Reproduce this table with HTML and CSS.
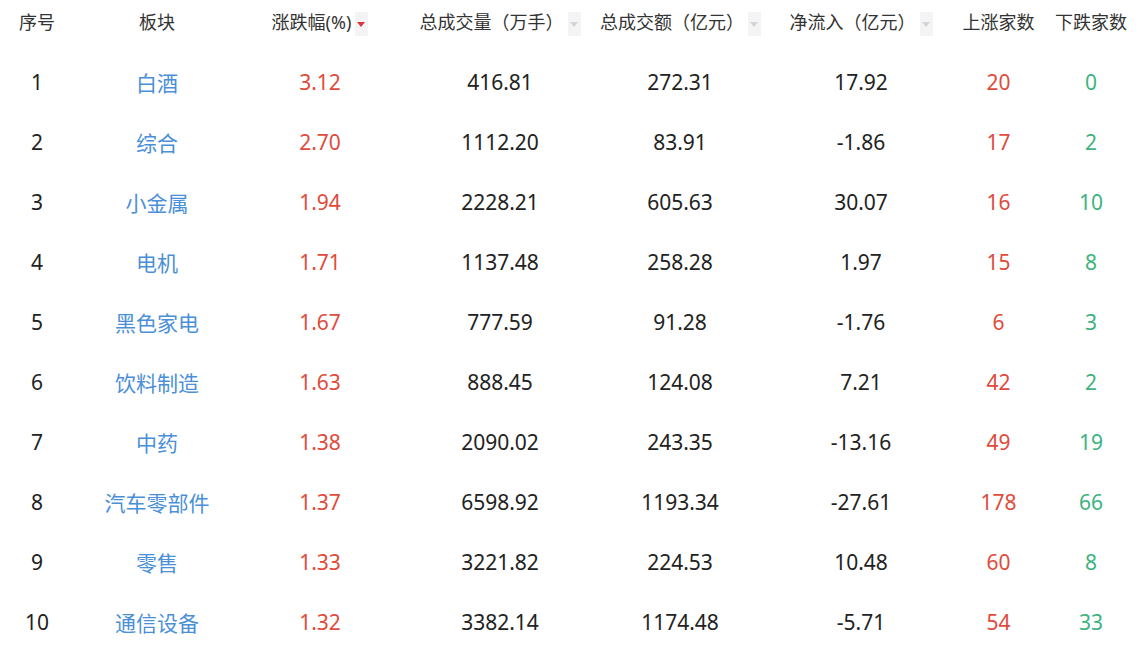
FILE: index.html
```html
<!DOCTYPE html>
<html lang="zh-CN">
<head>
<meta charset="utf-8">
<title>板块涨幅</title>
<link rel="stylesheet" href="styles.css">
</head>
<body>
<table class="board">
  <colgroup>
    <col class="c-no"><col class="c-name"><col class="c-chg"><col class="c-vol"><col class="c-amt"><col class="c-flow"><col class="c-up"><col class="c-down">
  </colgroup>
  <thead>
    <tr>
      <th>序号</th>
      <th>板块</th>
      <th>涨跌幅(%)<span class="sort active"></span></th>
      <th>总成交量（万手）<span class="sort"></span></th>
      <th>总成交额（亿元）<span class="sort"></span></th>
      <th>净流入（亿元）<span class="sort"></span></th>
      <th>上涨家数</th>
      <th>下跌家数</th>
    </tr>
  </thead>
  <tbody>
    <tr><td>1</td><td class="name">白酒</td><td class="red">3.12</td><td>416.81</td><td>272.31</td><td>17.92</td><td class="red">20</td><td class="green">0</td></tr>
    <tr><td>2</td><td class="name">综合</td><td class="red">2.70</td><td>1112.20</td><td>83.91</td><td>-1.86</td><td class="red">17</td><td class="green">2</td></tr>
    <tr><td>3</td><td class="name">小金属</td><td class="red">1.94</td><td>2228.21</td><td>605.63</td><td>30.07</td><td class="red">16</td><td class="green">10</td></tr>
    <tr><td>4</td><td class="name">电机</td><td class="red">1.71</td><td>1137.48</td><td>258.28</td><td>1.97</td><td class="red">15</td><td class="green">8</td></tr>
    <tr><td>5</td><td class="name">黑色家电</td><td class="red">1.67</td><td>777.59</td><td>91.28</td><td>-1.76</td><td class="red">6</td><td class="green">3</td></tr>
    <tr><td>6</td><td class="name">饮料制造</td><td class="red">1.63</td><td>888.45</td><td>124.08</td><td>7.21</td><td class="red">42</td><td class="green">2</td></tr>
    <tr><td>7</td><td class="name">中药</td><td class="red">1.38</td><td>2090.02</td><td>243.35</td><td>-13.16</td><td class="red">49</td><td class="green">19</td></tr>
    <tr><td>8</td><td class="name">汽车零部件</td><td class="red">1.37</td><td>6598.92</td><td>1193.34</td><td>-27.61</td><td class="red">178</td><td class="green">66</td></tr>
    <tr><td>9</td><td class="name">零售</td><td class="red">1.33</td><td>3221.82</td><td>224.53</td><td>10.48</td><td class="red">60</td><td class="green">8</td></tr>
    <tr><td>10</td><td class="name">通信设备</td><td class="red">1.32</td><td>3382.14</td><td>1174.48</td><td>-5.71</td><td class="red">54</td><td class="green">33</td></tr>
  </tbody>
</table>
</body>
</html>
```
FILE: styles.css
```css
html, body {
  margin: 0;
  padding: 0;
  background: #ffffff;
}

body {
  font-family: "Noto Sans", "Noto Sans CJK SC", sans-serif;
  color: #333333;
}

.board {
  width: 1147px;
  table-layout: fixed;
  border-collapse: collapse;
}

.c-no { width: 74px; }
.c-name { width: 166px; }
.c-chg { width: 160px; }
.c-vol { width: 200px; }
.c-amt { width: 160px; }
.c-flow { width: 202px; }
.c-up { width: 73px; }
.c-down { width: 112px; }

.board th {
  height: 52px;
  padding: 0 0 8px;
  box-sizing: border-box;
  font-size: 18px;
  font-weight: normal;
  line-height: 44px;
  white-space: nowrap;
  color: #333333;
  text-align: center;
  vertical-align: top;
}

.board td {
  height: 60px;
  padding: 0;
  font-size: 21px;
  text-align: center;
  vertical-align: middle;
  white-space: nowrap;
  color: #222222;
}

.board td.name { color: #4a8fd8; }
.board td.red { color: #e04b3c; }
.board td.green { color: #3db37e; }

.sort {
  display: inline-block;
  position: relative;
  width: 13px;
  height: 24px;
  margin-left: 4px;
  vertical-align: middle;
  background: #f4f3f5;
}

.sort::after {
  content: "";
  position: absolute;
  left: 2px;
  top: 10px;
  border-left: 4.5px solid transparent;
  border-right: 4.5px solid transparent;
  border-top: 5px solid #d4d4d6;
}

.sort.active::after {
  border-top-color: #d9353d;
}
```
